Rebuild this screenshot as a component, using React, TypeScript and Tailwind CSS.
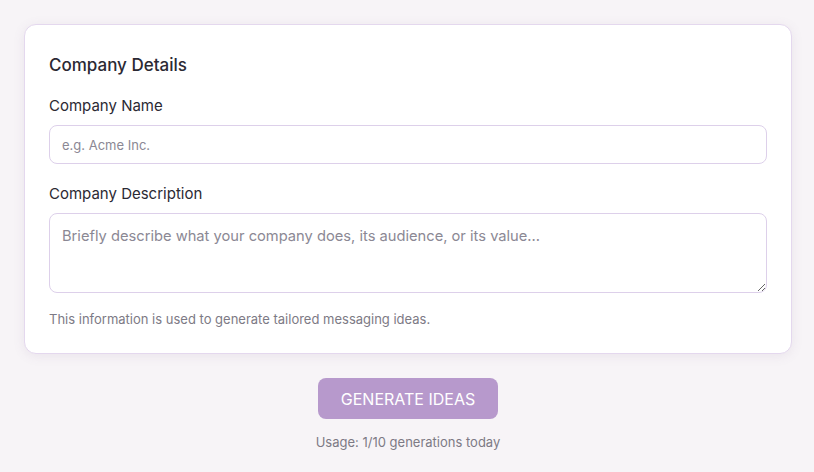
export default function App() {
  return (
    <div className="min-h-screen bg-[#f7f4f7] pt-6 pb-6 pl-6 pr-[22px] font-['Inter',sans-serif] text-[#2b2933]">
      <div className="rounded-xl border border-[#e4d8ee] bg-white px-6 pt-[26px] pb-6 shadow-[0_2px_12px_rgba(120,90,140,0.10)]">
        <h2 className="text-[17px] leading-7 font-medium">Company Details</h2>
        <label className="mt-[15px] block text-[15px] leading-6">Company Name</label>
        <input
          className="mt-[7px] block h-[39px] w-full rounded-lg border border-[#ddd0ea] bg-white px-3 text-[13px] placeholder:text-[#8b8894] outline-none"
          placeholder="e.g. Acme Inc."
        />
        <label className="mt-[18px] block text-[15px] leading-6">Company Description</label>
        <textarea
          className="mt-[7px] block h-[80px] w-full rounded-lg border border-[#ddd0ea] bg-white px-3 py-[10px] text-[14.7px] leading-6 placeholder:text-[#8b8894] outline-none"
          placeholder="Briefly describe what your company does, its audience, or its value..."
        />
        <p className="mt-[16px] text-[13px] leading-5 text-[#7d7a85]">
          This information is used to generate tailored messaging ideas.
        </p>
      </div>
      <div className="mt-6 flex flex-col items-center">
        <button className="h-[41px] w-[180px] rounded-lg bg-[#b799cc] text-[16px] text-white">
          GENERATE IDEAS
        </button>
        <p className="mt-[13px] text-[13px] leading-5 text-[#7d7a85]">Usage: 1/10 generations today</p>
      </div>
    </div>
  )
}
